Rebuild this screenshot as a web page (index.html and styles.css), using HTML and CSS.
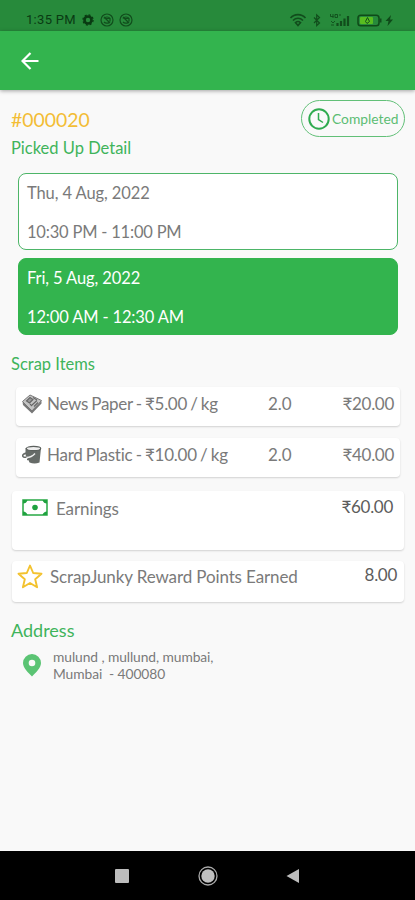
FILE: index.html
```html
<!DOCTYPE html>
<html lang="en">
<head>
<meta charset="utf-8">
<title>Pickup detail</title>
<link rel="stylesheet" href="styles.css">
</head>
<body>
<div class="status">
  <span class="time">1:35 PM</span>
  <svg class="s-gear" width="12" height="12" viewBox="0 0 12 12"><circle cx="6" cy="6" r="3.5" fill="none" stroke="#093a12" stroke-width="2.6"/><circle cx="6" cy="6" r="5.1" fill="none" stroke="#093a12" stroke-width="1.2" stroke-dasharray="2 2"/></svg>
  <svg class="s-app" width="14" height="14" viewBox="0 0 14 14" fill="none" stroke="#114d1c" stroke-width="1.2"><circle cx="7" cy="7" r="6"/><path d="M4 5.5c1-2 5-2 6 0M4 4l6 6M4 9c1.500 1.500 4 1.500 5 .5M6 5.500h4v3"/></svg>
  <svg class="s-app" width="14" height="14" viewBox="0 0 14 14" fill="none" stroke="#114d1c" stroke-width="1.2"><circle cx="7" cy="7" r="6"/><path d="M4 5.500c1-2 5-2 6 0M4 4l6 6M4 9c1.500 1.500 4 1.500 5 .5M6 5.500h4v3"/></svg>
  <span class="grow"></span>
  <svg width="108" height="16" viewBox="0 0 108 16" fill="none" stroke="#114d1c">
    <path d="M1.500 6c4-4.500 11-4.500 15 0M4 8.500c3-3 7-3 10 0M6.500 10.500q2.500-2 5 0L9 13.500z" stroke-width="1.600"/>
    <path d="M25 5.500l5.500 5.500-2.800 2.700V2.800l2.800 2.700L25 11" stroke-width="1.200"/>
    <path d="M41.500 2v2.500h3M44 2v4M46 2.500h2.500v3H46zM50 3h2M42 9l2 2 2-2M42 13h3" stroke-width=".9"/>
    <path d="M48.500 14v-3M52 14v-5M55.500 14V6.500M59 14V4" stroke-width="2.200"/>
    <rect x="69" y="3.200" width="21" height="10.600" rx="2.800" stroke="#0f4a19" stroke-width="1.500"/>
    <rect x="71" y="5" width="13" height="7" rx="1" fill="#58bd20" stroke="none"/>
    <path d="M78.500 5.500l-2 4 1.500 2 2.500-2z" stroke-width="1"/>
    <path d="M91.500 6.500v4" stroke-width="2"/>
    <path d="M102 3l-5.500 6h3l-1 5 5.500-6.500h-3z" fill="#0f4a19" stroke="none"/>
  </svg>
</div>
<header class="bar">
  <svg width="18" height="18" viewBox="0 0 18 18" fill="none" stroke="#fff" stroke-width="2.200"><path d="M17.500 9H1.500M9.500 1L1.500 9l8 8"/></svg>
</header>
<main>
  <div class="top">
    <div>
      <h1>#000020</h1>
      <h2 class="picked">Picked Up Detail</h2>
    </div>
    <div class="pill">
      <svg width="22" height="22" viewBox="0 0 22 22" fill="none" stroke="#2fab4f"><circle cx="11" cy="11" r="9.700" stroke-width="2"/><path d="M10.500 5v6.500l4.500 3" stroke-width="1.500"/></svg>
      <span>Completed</span>
    </div>
  </div>
  <section class="slot"><p class="d1">Thu, 4 Aug, 2022</p><p class="t1">10:30 PM - 11:00 PM</p></section>
  <section class="slot filled"><p class="d2">Fri, 5 Aug, 2022</p><p class="t2">12:00 AM - 12:30 AM</p></section>
  <h2 class="scrap">Scrap Items</h2>
  <section class="card item">
    <svg width="20" height="20" viewBox="0 0 20 20"><path d="M0.500 7.500L8 1l11.500 5.500L10 17z" fill="#c4c4c4" stroke="#777"/><path d="M0.500 8l9.500 8.500L19.500 7v2.500L10 19.500 1 11z" fill="#777"/><path d="M4.500 7l3.500-3.500 3 2-3.500 3.500zM10 11l5-4.500M12 12.500l4-4M8 10l2 2M11 3.500l4 2.500" stroke="#666" stroke-width="1.100" fill="#999"/></svg>
    <span class="name n1">News Paper - ₹5.00 / kg</span><span class="qty">2.0</span><span class="amt">₹20.00</span>
  </section>
  <section class="card item">
    <svg width="20" height="20" viewBox="0 0 20 20"><path d="M3.500 3H19l-1.500 14.500q-5 2-10 0L6 14 3.500 10z" fill="#666b68"/><ellipse cx="11.500" cy="3.500" rx="7.200" ry="2.100" fill="#eee" stroke="#5b605d" stroke-width="1.200"/><path d="M4 8q-5 2-2.500 4 4 1 8.500-2l4-3M5 14.500q5 0 8-5" fill="none" stroke="#666b68" stroke-width="1.500"/><path d="M4.500 12.500q5 0 8.500-4" fill="none" stroke="#eee" stroke-width="1.500"/></svg>
    <span class="name n2">Hard Plastic - ₹10.00 / kg</span><span class="qty">2.0</span><span class="amt">₹40.00</span>
  </section>
  <section class="card earn">
    <svg width="26" height="17" viewBox="0 0 26 17"><rect x="1" y="1" width="24" height="15" fill="#fff" stroke="#27a844" stroke-width="1.500"/><circle cx="13" cy="8.500" r="2.800" fill="#1fa23f"/><path d="M1 1h4.500q-1 3.500-4.500 3.500zM25 1h-4.500q1 3.500 4.500 3.500zM1 16h4.500q-1-3.500-4.500-3.500zM25 16h-4.500q1-3.500 4.500-3.500z" fill="#1fa23f"/></svg>
    <span class="name">Earnings</span><span class="amt">₹60.00</span>
  </section>
  <section class="card reward">
    <svg width="26" height="25" viewBox="0 0 26 25"><path d="M13 1.500l3.200 7.500 8.300.7-6.300 5.500 1.900 8.100-7.100-4.300-7.100 4.300 1.900-8.100-6.300-5.500 8.300-.7z" fill="none" stroke="#f3c22f" stroke-width="1.900" stroke-linejoin="round"/></svg>
    <span class="name">ScrapJunky Reward Points Earned</span><span class="amt">8.00</span>
  </section>
  <h2 class="addr">Address</h2>
  <div class="place">
    <svg width="18" height="23" viewBox="0 0 18 23"><path fill-rule="evenodd" d="M9 0a9 9 0 0 1 9 9c0 5-5.500 10-9 13.500C5.500 19 0 14 0 9a9 9 0 0 1 9-9zm0 5.700a3.300 3.300 0 1 0 0 6.600 3.300 3.300 0 0 0 0-6.600z" fill="#5bc474"/></svg>
    <p><span class="a1">mulund , mullund, mumbai,</span><br><span class="a2">Mumbai&nbsp; - 400080</span></p>
  </div>
</main>
<nav>
  <svg width="14" height="14" viewBox="0 0 14 14"><rect width="14" height="14" rx="1" fill="#bdbdbd"/></svg>
  <svg width="20" height="20" viewBox="0 0 20 20"><circle cx="10" cy="10" r="9" fill="none" stroke="#aaa" stroke-width="1.300"/><circle cx="10" cy="10" r="6.700" fill="#c0c0c0"/></svg>
  <svg width="14" height="16" viewBox="0 0 14 16"><path d="M0.500 8L13 1v14z" fill="#bdbdbd"/></svg>
</nav>
</body>
</html>
```
FILE: styles.css
```css
* { box-sizing: border-box; }
body { margin: 0; width: 415px; height: 900px; display: flex; flex-direction: column; overflow: hidden; background: #f9f9f9; color: #7a7a7a; font-family: Lato, sans-serif; }
h1, h2, p { margin: 0; font-weight: 400; white-space: nowrap; }
svg { display: block; flex: none; }
.status { height: 31px; flex: none; display: flex; align-items: center; padding: 8px 18px 0 26px; background: #278a3b; }
.time { width: 50px; font: 400 13px/16px Roboto, sans-serif; letter-spacing: .3px; color: #0a3a13; white-space: nowrap; }
.s-gear { margin: 0 6px; }
.s-app { margin-right: 5px; }
.grow { flex: 1; }
.bar { height: 59px; flex: none; display: flex; align-items: center; padding-left: 21px; padding-top: 1px; background: #33b44e; box-shadow: 0 1px 4px rgba(0,0,0,.35); }
main { flex: 1; padding: 10px 11px 0; }
.top { display: flex; justify-content: space-between; height: 73px; }
h1 { font-size: 19.4px; line-height: 24px; margin-top: 8px; color: #f3bd35; }
h2 { font-size: 16.5px; line-height: 22px; color: #3fb45b; }
.picked { margin-top: 5px; }
.pill { width: 104px; height: 37px; margin-right: -1px; border: 1px solid #62c078; border-radius: 19px; display: flex; align-items: center; padding-left: 6px; gap: 2px; font-size: 13.8px; color: #5cbd74; }
.slot { height: 77px; margin: 0 6px 8px 7px; border: 1px solid #4db568; border-radius: 8px; padding: 9px 8px; background: #fff; font-size: 16.5px; line-height: 20px; }
.slot p + p { margin-top: 19px; }
.slot.filled { background: #33b44e; border-color: #33b44e; color: #fff; }
.d1, .d2 { letter-spacing: -.1px; }
.t1 { letter-spacing: -.2px; }
.t2 { letter-spacing: -.15px; }
.scrap { margin-top: 18px; }
.card { display: flex; background: #fff; border-radius: 4px; box-shadow: 0 1px 2px rgba(0,0,0,.16); font-size: 17px; line-height: 22px; white-space: nowrap; }
.item { height: 39px; margin: 0 4px 12px 5px; padding: 6px 6px 0; }
.item svg { margin-top: 1px; }
.scrap + .item { margin-top: 12px; }
.item .name { margin-left: 5px; width: 221px; letter-spacing: -.3px; word-spacing: -.8px; }
.item .n2 { letter-spacing: -.25px; }
.amt { margin-left: auto; letter-spacing: -.3px; }
.earn { height: 59px; margin: 14px 0 11px 1px; padding: 8px 11px 0 10px; }
.earn .name { margin: -1px 0 0 8px; letter-spacing: -.1px; }
.earn .amt, .reward .amt { color: #5c5c5c; margin-top: -3px; }
.reward { height: 41px; margin-left: 1px; padding: 5px 7px 0 5px; }
.reward svg { margin-top: -2px; }
.reward .name { margin: -1px 0 0 7px; line-height: 24px; letter-spacing: -.12px; }
.reward .amt { margin-top: -2px; }
.addr { margin-top: 17px; font-size: 18px; }
.place { display: flex; margin: 7px 0 0 12px; gap: 12px; font-size: 13.8px; line-height: 17px; }
.place svg { margin-top: 6px; }
.place p { letter-spacing: -.08px; }
nav { height: 49px; flex: none; display: flex; align-items: center; justify-content: space-between; padding: 0 115px; background: #000; }
```
